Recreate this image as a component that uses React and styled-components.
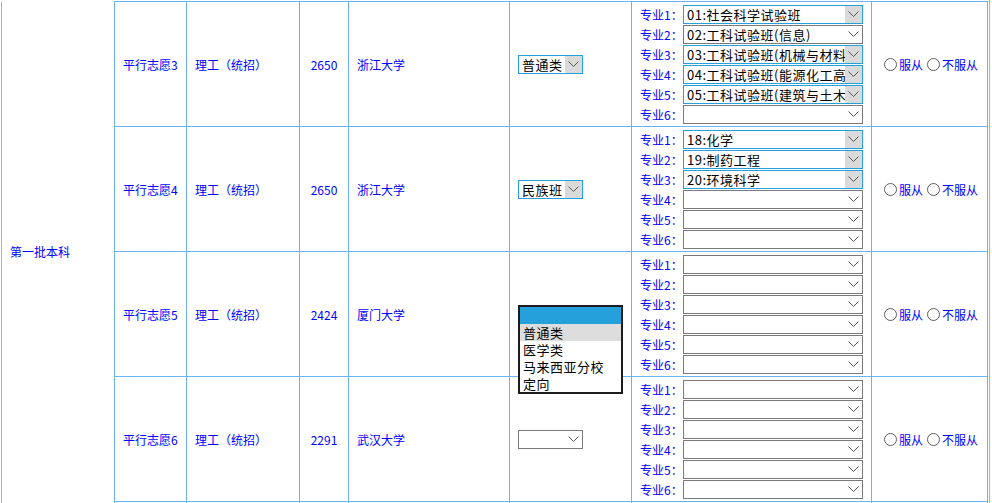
import React from 'react';
import styled, { createGlobalStyle } from 'styled-components';

const GlobalStyle = createGlobalStyle`
  html, body { margin: 0; padding: 0; overflow: hidden; background: #fff; }
  body { font-family: "Noto Sans CJK SC", "Microsoft YaHei", sans-serif; }
`;

const Frame = styled.div`
  display: inline-block;
  padding: 1px 1px 0 1px;
  border-right: 1px solid #9db6d5;
`;

const Table = styled.table`
  border-collapse: collapse;
  table-layout: fixed;
  width: 987px;
`;

const Row = styled.tr`
  height: 125px;
`;

const Cell = styled.td`
  border: 1px solid #6cb4f0;
  padding: 0 8px;
  vertical-align: middle;
  text-align: ${(p) => (p.$center ? 'center' : 'left')};
  font-size: 12px;
  color: #0000ff;
  white-space: nowrap;
`;

const BatchCell = styled(Cell)`
  border-top: none;
  border-bottom: none;
  border-left: 1px solid #9db6d5;
`;

const MajorCell = styled(Cell)`
  padding: 2px 8px;
`;

const MajorList = styled.div`
  display: flex;
  flex-direction: column;
`;

const MajorLine = styled.div`
  display: flex;
  align-items: center;
  height: 20px;
`;

const Label = styled.span`
  width: 43px;
  flex: none;
  font-size: 12px;
  color: #0000ff;
`;

const SelectBox = styled.div`
  position: relative;
  display: flex;
  align-items: stretch;
  width: ${(p) => p.$w}px;
  height: 19px;
  box-sizing: border-box;
  border: 1px solid ${(p) => (p.$active ? '#26a0da' : '#7a7a7a')};
  background: #fff;
  font-size: 13px;
  letter-spacing: 0.5px;
  color: #000;
`;

const SelectText = styled.span`
  flex: 1;
  min-width: 0;
  overflow: hidden;
  white-space: nowrap;
  padding-left: 3px;
  line-height: 17px;
`;

const Arrow = styled.span`
  flex: none;
  width: 17px;
  display: flex;
  align-items: center;
  justify-content: center;
  background: ${(p) => (p.$active ? '#dadada' : 'transparent')};
`;

const Drop = styled.div`
  position: relative;
  width: 65px;
  height: 19px;
`;

const ListBox = styled.div`
  position: absolute;
  top: 0;
  left: 0;
  z-index: 5;
  width: 105px;
  box-sizing: border-box;
  border: 2px solid #1c1c1c;
  background: #fff;
  font-size: 13px;
  letter-spacing: 0.5px;
  color: #000;
`;

const Option = styled.div`
  height: 17px;
  line-height: 17px;
  overflow: hidden;
  padding-left: 3px;
  white-space: nowrap;
  background: ${(p) => (p.$tone === 'blue' ? '#26a0da' : p.$tone === 'gray' ? '#dddddd' : '#fff')};
`;

const RadioGroup = styled.div`
  display: flex;
  align-items: center;
  padding-left: 4px;
`;

const RadioItem = styled.label`
  display: flex;
  align-items: center;
  margin-right: 4px;
  font-size: 12px;
  color: #0000ff;
`;

const Circle = styled.span`
  width: 13px;
  height: 13px;
  box-sizing: border-box;
  border: 1px solid #5f5f5f;
  border-radius: 50%;
  background: #fff;
  margin-right: 2px;
`;

const Chevron = () => (
  <svg width="11" height="6" viewBox="0 0 11 6">
    <polyline points="0.5,0.5 5.5,5.5 10.5,0.5" fill="none" stroke="#555" strokeWidth="1" />
  </svg>
);

const Select = ({ value = '', active = false, width }) => (
  <SelectBox $w={width} $active={active}>
    <SelectText>{value}</SelectText>
    <Arrow $active={active}>
      <Chevron />
    </Arrow>
  </SelectBox>
);

const rows = [
  {
    name: '平行志愿3',
    score: '2650',
    school: '浙江大学',
    cls: { value: '普通类', active: true },
    majors: [
      { v: '01:社会科学试验班', a: true },
      { v: '02:工科试验班(信息)', a: false },
      { v: '03:工科试验班(机械与材料)', a: true },
      { v: '04:工科试验班(能源化工高分子)', a: true },
      { v: '05:工科试验班(建筑与土木)', a: true },
      { v: '', a: false },
    ],
  },
  {
    name: '平行志愿4',
    score: '2650',
    school: '浙江大学',
    cls: { value: '民族班', active: true },
    majors: [
      { v: '18:化学', a: true },
      { v: '19:制药工程', a: true },
      { v: '20:环境科学', a: true },
      { v: '', a: false },
      { v: '', a: false },
      { v: '', a: false },
    ],
  },
  {
    name: '平行志愿5',
    score: '2424',
    school: '厦门大学',
    open: true,
    majors: Array.from({ length: 6 }, () => ({ v: '', a: false })),
  },
  {
    name: '平行志愿6',
    score: '2291',
    school: '武汉大学',
    cls: { value: '', active: false },
    majors: Array.from({ length: 6 }, () => ({ v: '', a: false })),
  },
];

const options = ['', '普通类', '医学类', '马来西亚分校', '定向'];

export default function App() {
  return (
    <>
      <GlobalStyle />
      <Frame>
        <Table>
          <colgroup>
            <col style={{ width: 113 }} />
            <col style={{ width: 72 }} />
            <col style={{ width: 113 }} />
            <col style={{ width: 49 }} />
            <col style={{ width: 161 }} />
            <col style={{ width: 122 }} />
            <col style={{ width: 240 }} />
            <col style={{ width: 116 }} />
          </colgroup>
          <tbody>
            {rows.map((r, i) => (
              <Row key={r.name}>
                {i === 0 && <BatchCell rowSpan={4}>第一批本科</BatchCell>}
                <Cell>{r.name}</Cell>
                <Cell>理工（统招）</Cell>
                <Cell $center>{r.score}</Cell>
                <Cell>{r.school}</Cell>
                <Cell>
                  {r.open ? (
                    <Drop>
                      <ListBox>
                        {options.map((o, k) => (
                          <Option key={k} $tone={k === 0 ? 'blue' : k === 1 ? 'gray' : ''}>
                            {o}
                          </Option>
                        ))}
                      </ListBox>
                    </Drop>
                  ) : (
                    <Select width={65} value={r.cls.value} active={r.cls.active} />
                  )}
                </Cell>
                <MajorCell>
                  <MajorList>
                    {r.majors.map((m, k) => (
                      <MajorLine key={k}>
                        <Label>专业{k + 1}：</Label>
                        <Select width={180} value={m.v} active={m.a} />
                      </MajorLine>
                    ))}
                  </MajorList>
                </MajorCell>
                <Cell>
                  <RadioGroup>
                    <RadioItem>
                      <Circle />
                      服从
                    </RadioItem>
                    <RadioItem>
                      <Circle />
                      不服从
                    </RadioItem>
                  </RadioGroup>
                </Cell>
              </Row>
            ))}
            <Row>
              <BatchCell />
              <Cell />
              <Cell />
              <Cell />
              <Cell />
              <Cell />
              <Cell />
              <Cell />
            </Row>
          </tbody>
        </Table>
      </Frame>
    </>
  );
}
